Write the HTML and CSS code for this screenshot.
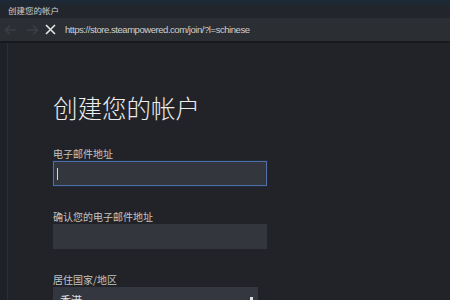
FILE: index.html
```html
<!DOCTYPE html>
<html lang="zh-CN">
<head>
    <meta charset="UTF-8" />
    <title>创建您的帐户</title>
    <link rel="stylesheet" href="styles.css">
</head>
<body>
    <div class="titlebar">创建您的帐户</div>
    <div class="toolbar">
        <svg class="nav-btn" width="13" height="12" viewBox="0 0 13 12">
            <path d="M12 6H2M6 1.5L1.5 6 6 10.5" fill="none" stroke="#3b3f46" stroke-width="1.6"/>
        </svg>
        <svg class="nav-btn" width="13" height="12" viewBox="0 0 13 12">
            <path d="M1 6h10M7 1.5L11.5 6 7 10.5" fill="none" stroke="#3b3f46" stroke-width="1.6"/>
        </svg>
        <svg class="stop-btn" width="11" height="11" viewBox="0 0 11 11">
            <path d="M1 1l9 9M10 1l-9 9" fill="none" stroke="#e6e6e6" stroke-width="1.6"/>
        </svg>
        <span class="url">https://store.steampowered.com/join/?l=schinese</span>
    </div>

    <div class="page">
        <div class="sidebar"></div>
        <div class="content">
            <h1 class="page-title">创建您的帐户</h1>

            <div class="field">
                <label class="field-label">电子邮件地址</label>
                <div class="input focused"><span class="caret"></span></div>
            </div>

            <div class="field">
                <label class="field-label">确认您的电子邮件地址</label>
                <div class="input"></div>
            </div>

            <div class="field">
                <label class="field-label">居住国家/地区</label>
                <div class="select">
                    <span>香港</span>
                    <span class="select-arrow"></span>
                </div>
            </div>
        </div>
    </div>
</body>
</html>
```

FILE: styles.css
```css
body {
    margin: 0;
    background-color: #212328;
    font-family: "Liberation Sans", "Noto Sans CJK SC", sans-serif;
    color: #c6c6c6;
    overflow: hidden;
}
.titlebar {
    height: 18px;
    line-height: 20px;
    padding-left: 8px;
    font-family: "Noto Sans CJK SC", sans-serif;
    font-size: 8.5px;
    color: #d2d2d2;
    background: linear-gradient(#1c2a38, #22262c 40%);
}
.toolbar {
    height: 23px;
    display: flex;
    align-items: center;
    background-color: #2b2e33;
    border-bottom: 2px solid #18191c;
}
.nav-btn {
    margin-left: 4px;
    margin-right: 5px;
}
.stop-btn {
    margin-left: 1px;
}
.url {
    margin-left: 9px;
    font-size: 9.5px;
    color: #cfcfcf;
    letter-spacing: -0.45px;
}
.page {
    display: flex;
    height: 260px;
}
.sidebar {
    width: 7px;
    background-color: #1e2228;
    border-right: 1px solid #2c3036;
}
.content {
    padding-left: 45px;
    padding-top: 50px;
}
.page-title {
    margin: 0 0 24px 0;
    font-family: "Noto Sans CJK SC", sans-serif;
    font-size: 24.5px;
    font-weight: 300;
    line-height: 30px;
    color: #ececec;
}
.field {
    margin-bottom: 24px;
}
.field-label {
    display: block;
    font-family: "Noto Sans CJK SC", sans-serif;
    font-size: 10px;
    line-height: 14px;
    color: #c4c4c4;
}
.input {
    box-sizing: border-box;
    width: 214px;
    height: 25px;
    background-color: #33363d;
    border: 1px solid #33363d;
    display: flex;
    align-items: center;
}
.input.focused {
    border-color: #4f6ea6;
    box-shadow: 0 0 0 1px #1f2a3c;
}
.caret {
    width: 1px;
    height: 12px;
    margin-left: 3px;
    background-color: #d8d8d8;
}
.select {
    box-sizing: border-box;
    width: 205px;
    height: 25px;
    background-color: #34373f;
    display: flex;
    justify-content: space-between;
    align-items: center;
    padding: 0 5px 0 7px;
    font-family: "Noto Sans CJK SC", sans-serif;
    font-size: 11px;
    color: #e0e0e0;
}
.select-arrow {
    width: 3px;
    height: 6px;
    background-color: #e0e0e0;
}
```
